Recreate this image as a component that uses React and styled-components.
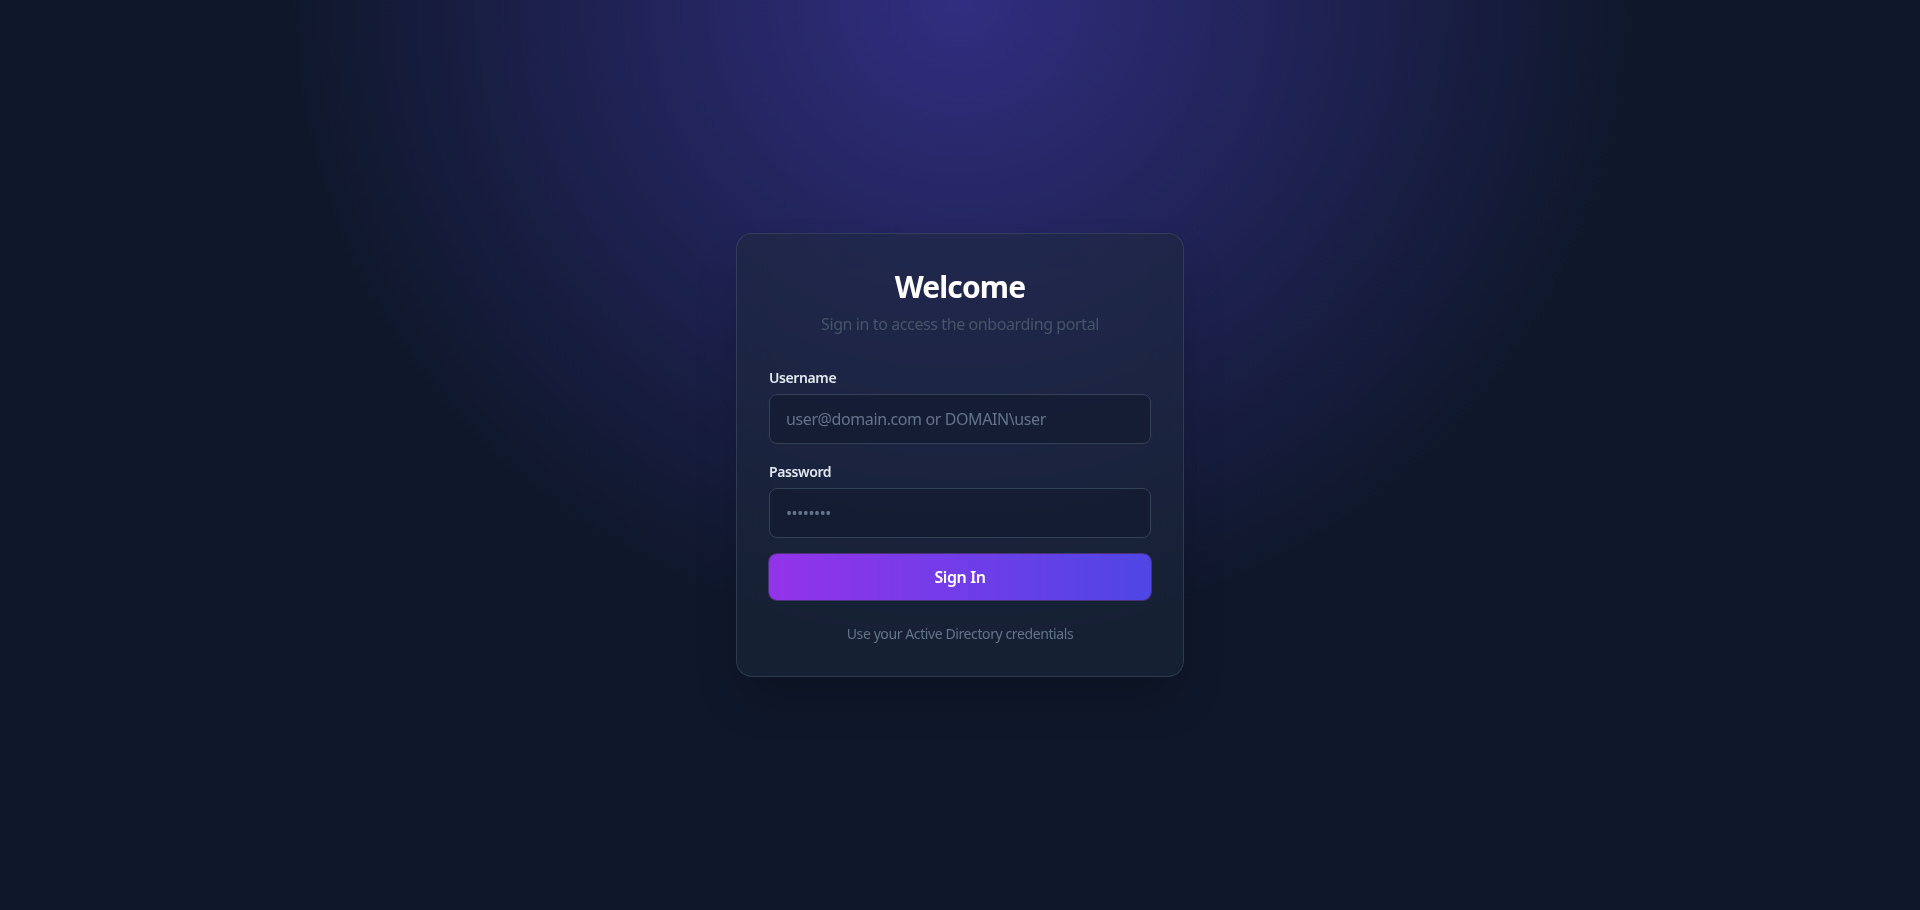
import React from "react";
import styled, { createGlobalStyle } from "styled-components";

const GlobalStyle = createGlobalStyle`
  * { box-sizing: border-box; }
  html, body { margin: 0; padding: 0; }
  body {
    background: #0f172a;
    font-family: "Noto Sans", "Open Sans", sans-serif;
    letter-spacing: -0.025em;
  }
`;

const Page = styled.div`
  min-height: 910px;
  display: flex;
  align-items: center;
  justify-content: center;
  padding: 16px;
  background: radial-gradient(ellipse at top, #312e81, #0f172a 50%, #0f172a);
`;

const Card = styled.div`
  width: 448px;
  padding: 32px;
  border-radius: 16px;
  border: 1px solid rgba(71, 85, 105, 0.5);
  background: rgba(30, 41, 59, 0.5);
  backdrop-filter: blur(16px);
  box-shadow: 0 25px 50px -12px rgba(0, 0, 0, 0.25);
`;

const Header = styled.div`
  text-align: center;
  margin-bottom: 30px;
`;

const Title = styled.h1`
  margin: 0;
  padding-top: 3px;
  font-size: 30px;
  line-height: 36px;
  font-weight: 700;
  color: #ffffff;
  letter-spacing: -0.03em;
`;

const Subtitle = styled.p`
  margin: 7px 0 0;
  font-size: 16px;
  line-height: 24px;
  color: #475569;
`;

const Form = styled.form`
  display: flex;
  flex-direction: column;
  gap: 16px;
`;

const Field = styled.div`
  display: flex;
  flex-direction: column;
`;

const Label = styled.label`
  display: block;
  padding-top: 2px;
  margin-bottom: 6px;
  font-size: 14px;
  line-height: 20px;
  font-weight: 600;
  color: #e2e8f0;
`;

const Input = styled.input`
  width: 100%;
  padding: 12px 16px;
  font-family: inherit;
  letter-spacing: inherit;
  font-size: 16px;
  line-height: 24px;
  height: 50px;
  color: #ffffff;
  background: rgba(15, 23, 42, 0.5);
  border: 1px solid #334155;
  border-radius: 8px;
  outline: none;
  &::placeholder {
    color: #64748b;
  }
`;

const Button = styled.button`
  width: 100%;
  height: 46px;
  padding: 10px 16px;
  font-family: inherit;
  letter-spacing: inherit;
  font-size: 16px;
  line-height: 24px;
  font-weight: 600;
  color: #ffffff;
  border: none;
  border-radius: 8px;
  background: linear-gradient(to right, #9333ea, #4f46e5);
  box-shadow: 0 0 0 1px rgba(168, 85, 247, 0.35);
  cursor: pointer;
`;

const Footer = styled.p`
  margin: 24px 0 0;
  text-align: center;
  font-size: 14px;
  line-height: 20px;
  color: #64748b;
`;

export default function App() {
  return (
    <>
      <GlobalStyle />
      <Page>
        <Card>
          <Header>
            <Title>Welcome</Title>
            <Subtitle>Sign in to access the onboarding portal</Subtitle>
          </Header>
          <Form onSubmit={(e) => e.preventDefault()}>
            <Field>
              <Label htmlFor="username">Username</Label>
              <Input id="username" type="text" placeholder="user@domain.com or DOMAIN\user" />
            </Field>
            <Field>
              <Label htmlFor="password">Password</Label>
              <Input id="password" type="password" placeholder="••••••••" />
            </Field>
            <Button type="submit">Sign In</Button>
          </Form>
          <Footer>Use your Active Directory credentials</Footer>
        </Card>
      </Page>
    </>
  );
}
